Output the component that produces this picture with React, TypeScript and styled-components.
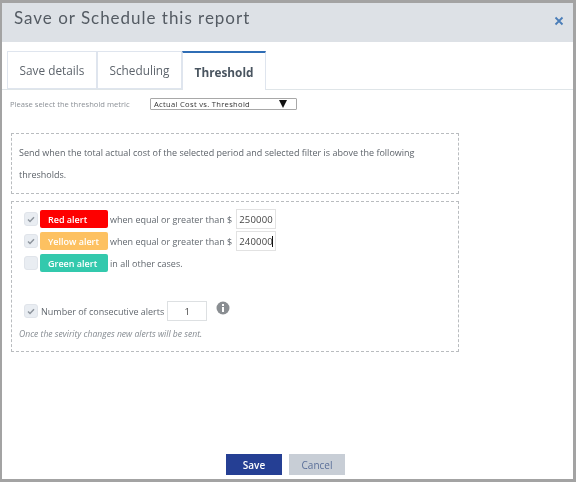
import React from "react";
import styled, { createGlobalStyle } from "styled-components";

const Global = createGlobalStyle`
  html, body { margin: 0; padding: 0; background: #fff; }
  body { font-family: "Open Sans", "Liberation Sans", sans-serif; color: #4a5058; }
  * { box-sizing: border-box; }
`;

const Dialog = styled.div`
  width: 576px;
  height: 482px;
  border: solid #a3a3a3;
  border-width: 3px 3px 3px 2px;
  background: #fff;
  display: flex;
  flex-direction: column;
  filter: blur(0.35px);
`;

const Header = styled.header`
  height: 39px;
  flex: none;
  background: #dde1e6;
  display: flex;
  align-items: flex-start;
  justify-content: space-between;
  padding: 4px 9px 0 12px;
`;

const Title = styled.h1`
  margin: 0;
  font: 400 17px/22px "Lato", sans-serif;
  letter-spacing: 0.98px;
  color: #545b63;
`;

const Close = styled.button`
  border: 0;
  background: none;
  padding: 0;
  margin-top: 9px;
  width: 10px;
  height: 10px;
  display: flex;
  color: #4a7db8;
`;

const Tabs = styled.nav`
  margin-top: 9px;
  height: 39px;
  flex: none;
  display: flex;
  padding-left: 5px;
  border-bottom: 1px solid #dfe5e8;
`;

const Tab = styled.div<{ $active?: boolean; $width: number }>`
  width: ${(p) => p.$width}px;
  height: ${(p) => (p.$active ? 39 : 38)}px;
  display: flex;
  align-items: center;
  justify-content: center;
  font-size: 11.8px;
  font-weight: ${(p) => (p.$active ? 700 : 400)};
  color: ${(p) => (p.$active ? "#4a5560" : "#5d646c")};
  background: #fff;
  border: 1px solid #dfe5ee;
  border-top: ${(p) => (p.$active ? "2px solid #2f6db5" : "1px solid #dfe5ee")};
  border-bottom: ${(p) => (p.$active ? "0" : "1px solid #dfe5ee")};
`;

const MetricRow = styled.div`
  margin-top: 8px;
  height: 12px;
  padding-left: 8px;
  display: flex;
  align-items: center;
  font-size: 7.6px;
  color: #8b9096;
`;

const MetricLabel = styled.span`
  width: 140px;
  flex: none;
`;

const MetricSelect = styled.div`
  width: 147px;
  height: 12px;
  border: 1px solid #a8a8a8;
  border-radius: 1px;
  display: flex;
  align-items: center;
  justify-content: space-between;
  padding: 0 9px 0 3px;
  font-size: 7.6px;
  letter-spacing: 0.3px;
  color: #333;
`;

const Caret = styled.span`
  width: 0;
  height: 0;
  border-left: 4px solid transparent;
  border-right: 4px solid transparent;
  border-top: 8px solid #111;
`;

const Panel = styled.section<{ $height: number }>`
  margin: 0 0 0 9px;
  width: 448px;
  height: ${(p) => p.$height}px;
  border: 1px dashed #b9bcbf;
`;

const NoticePanel = styled(Panel)`
  margin-top: 23px;
  padding: 8px 7px;
  font-size: 9px;
  line-height: 22px;
  color: #5d636a;
`;

const NoticeText = styled.p`
  margin: 0;
  width: 400px;
`;

const AlertPanel = styled(Panel)`
  margin-top: 7px;
  padding: 6px 0 0 12px;
`;

const AlertRow = styled.div`
  display: flex;
  align-items: center;
  height: 22px;
  font-size: 9px;
  color: #62686f;
`;

const Check = styled.span`
  width: 14px;
  height: 14px;
  flex: none;
  border-radius: 3px;
  background: #e9edf2;
  border: 1px solid #e0e4ea;
  display: flex;
  align-items: center;
  justify-content: center;
  color: #8d949c;
`;

const Badge = styled.span<{ $bg: string }>`
  width: 68px;
  height: 18px;
  margin: 0 2px;
  flex: none;
  border-radius: 2px;
  background: ${(p) => p.$bg};
  color: #fff;
  font-size: 9px;
  font-weight: 600;
  padding-left: 8px;
  display: flex;
  align-items: center;
`;

const AmountInput = styled.div`
  width: 40px;
  height: 20px;
  margin-left: 4px;
  border: 1px solid #e2e2e2;
  display: flex;
  align-items: center;
  padding-left: 2px;
  font-size: 9.5px;
  letter-spacing: 0.2px;
  color: #444;
`;

const TextCursor = styled.span`
  width: 1px;
  height: 11px;
  margin-left: -1px;
  background: #111;
`;

const ConsecutiveRow = styled(AlertRow)`
  margin-top: 26px;
`;

const ConsecutiveLabel = styled.span`
  margin-left: 3px;
  white-space: nowrap;
`;

const CountInput = styled.div`
  width: 40px;
  height: 20px;
  margin-left: 3px;
  border: 1px solid #dde0e2;
  display: flex;
  align-items: center;
  justify-content: center;
  font-size: 9.5px;
  color: #444;
`;

const InfoIcon = styled.svg`
  width: 14px;
  height: 14px;
  margin: -6px 0 0 9px;
`;

const Note = styled.p`
  margin: 6px 0 0 -5px;
  font-size: 8.6px;
  font-style: italic;
  color: #858b91;
`;

const Footer = styled.footer`
  margin-top: auto;
  padding: 0 0 4px 224px;
  display: flex;
  gap: 7px;
`;

const Button = styled.button<{ $primary?: boolean }>`
  width: 56px;
  height: 21px;
  border: 0;
  padding: 0;
  font: ${(p) => (p.$primary ? 600 : 400)} 10px "Open Sans", sans-serif;
  color: ${(p) => (p.$primary ? "#fff" : "#5a6f99")};
  background: ${(p) => (p.$primary ? "#253f94" : "#c8ced6")};
`;

const CheckMark = () => (
  <svg width="8" height="7" viewBox="0 0 8 7" fill="none" stroke="currentColor" strokeWidth="1.4">
    <path d="M1 3.6 3 5.5 7 1.2" />
  </svg>
);

export default function App() {
  return (
    <>
      <Global />
      <Dialog>
        <Header>
          <Title>Save or Schedule this report</Title>
          <Close aria-label="Close">
            <svg width="10" height="10" viewBox="0 0 10 10" stroke="currentColor" strokeWidth="1.8">
              <path d="M1.5 1.5 8.5 8.5M8.5 1.5 1.5 8.5" />
            </svg>
          </Close>
        </Header>
        <Tabs>
          <Tab $width={90}>Save details</Tab>
          <Tab $width={85}>Scheduling</Tab>
          <Tab $width={84} $active>Threshold</Tab>
        </Tabs>
        <MetricRow>
          <MetricLabel>Please select the threshold metric</MetricLabel>
          <MetricSelect>
            Actual Cost vs. Threshold
            <Caret />
          </MetricSelect>
        </MetricRow>
        <NoticePanel $height={61}>
          <NoticeText>
            Send when the total actual cost of the selected period and selected filter is above the following thresholds.
          </NoticeText>
        </NoticePanel>
        <AlertPanel $height={151}>
          <AlertRow>
            <Check><CheckMark /></Check>
            <Badge $bg="#fe0000">Red alert</Badge>
            when equal or greater than $
            <AmountInput>250000</AmountInput>
          </AlertRow>
          <AlertRow>
            <Check><CheckMark /></Check>
            <Badge $bg="#fdc161">Yellow alert</Badge>
            when equal or greater than $
            <AmountInput>240000<TextCursor /></AmountInput>
          </AlertRow>
          <AlertRow>
            <Check />
            <Badge $bg="#33c9ad">Green alert</Badge>
            in all other cases.
          </AlertRow>
          <ConsecutiveRow>
            <Check><CheckMark /></Check>
            <ConsecutiveLabel>Number of consecutive alerts</ConsecutiveLabel>
            <CountInput>1</CountInput>
            <InfoIcon viewBox="0 0 14 14">
              <circle cx="7" cy="7" r="6.5" fill="#8a8e92" />
              <rect x="6" y="6" width="2" height="5" fill="#fff" />
              <rect x="6" y="3" width="2" height="2" fill="#fff" />
            </InfoIcon>
          </ConsecutiveRow>
          <Note>Once the sevirity changes new alerts will be sent.</Note>
        </AlertPanel>
        <Footer>
          <Button $primary>Save</Button>
          <Button>Cancel</Button>
        </Footer>
      </Dialog>
    </>
  );
}
